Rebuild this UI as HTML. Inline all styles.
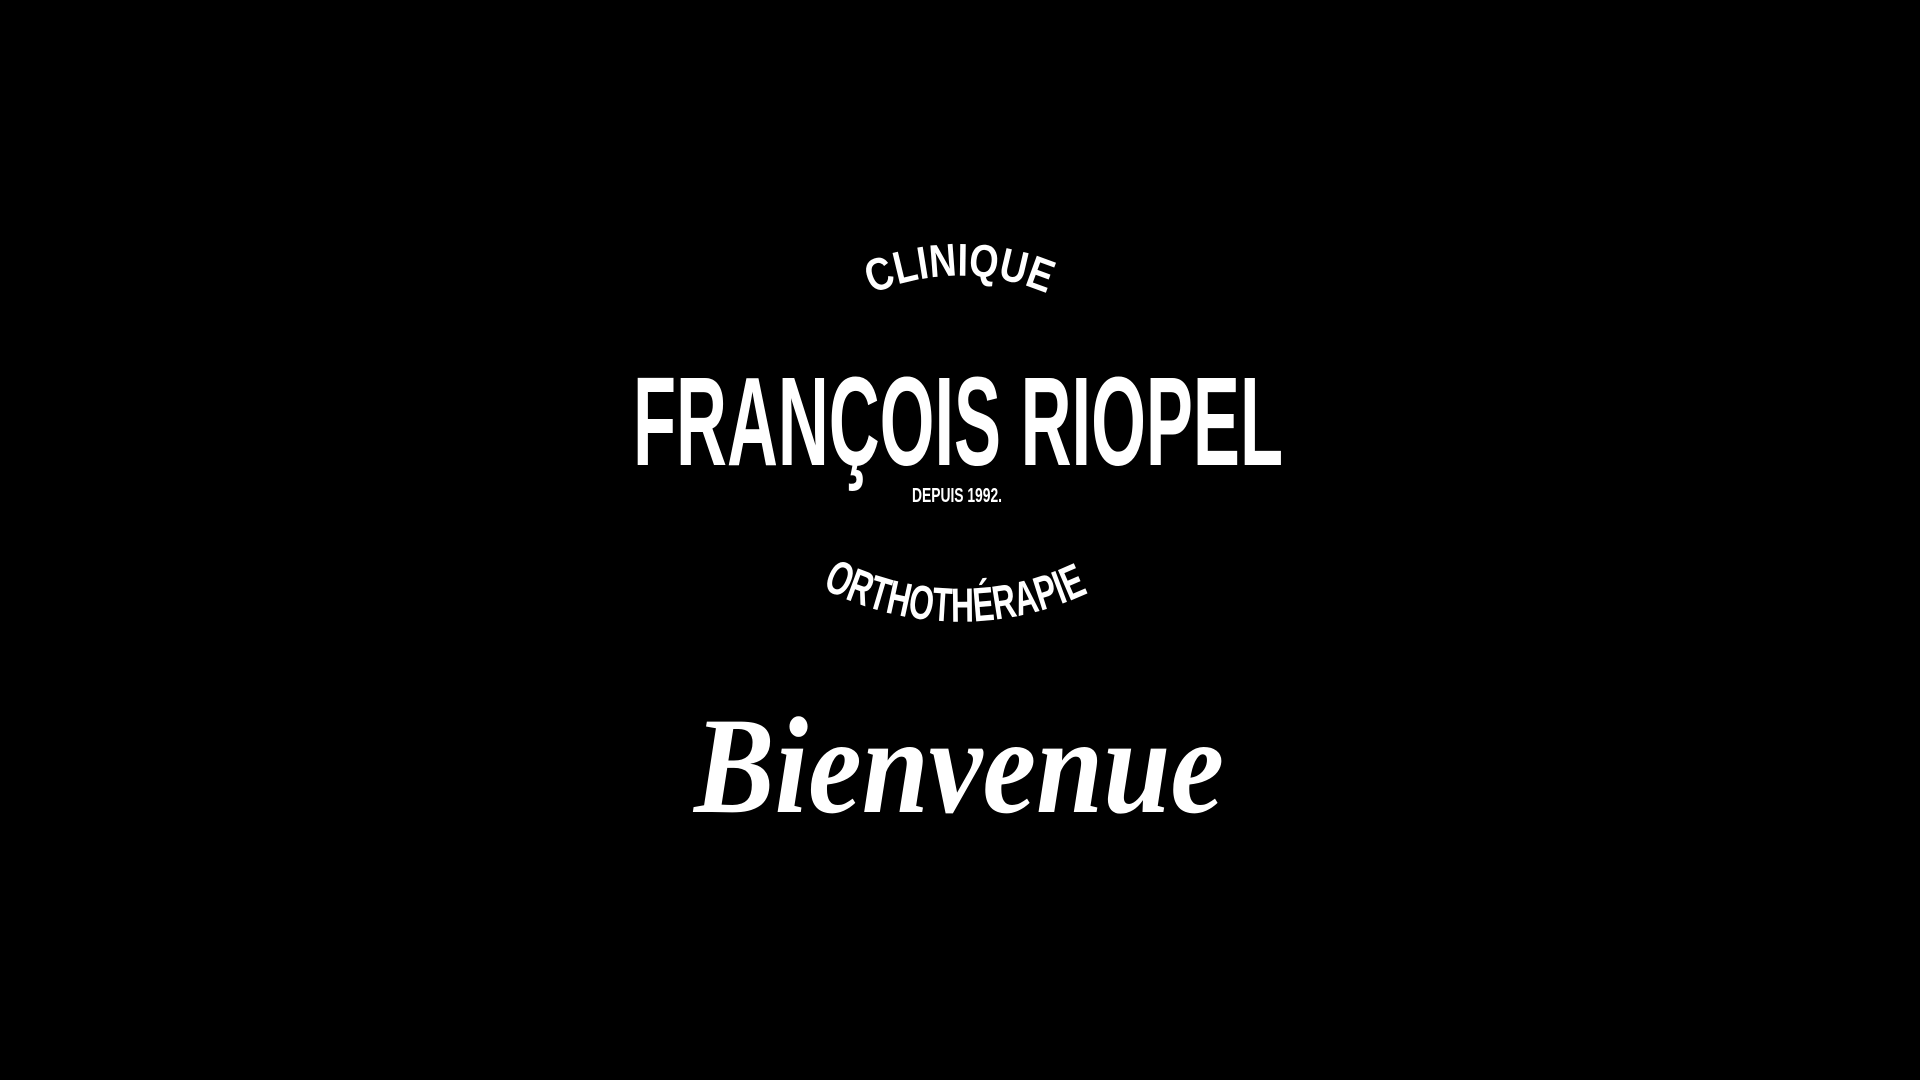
<!DOCTYPE html>
<html><head><meta charset="utf-8"><style>
html,body{margin:0;padding:0;background:#000;width:1920px;height:1080px;overflow:hidden}
svg{display:block}
text{fill:#fff;font-family:"Liberation Sans",sans-serif;font-weight:bold}
</style></head><body>
<svg width="1920" height="1080" viewBox="0 0 1920 1080">
<defs>
<path id="top" d="M872 294 A220 220 0 0 1 1048 294"/>
<path id="bot" d="M822 588 A300 300 0 0 0 1098 588"/>
</defs>
<text font-size="46"><textPath href="#top" textLength="180" lengthAdjust="spacingAndGlyphs">CLINIQUE</textPath></text>
<text x="633" y="465" font-size="126" textLength="650" lengthAdjust="spacingAndGlyphs">FRANÇOIS RIOPEL</text>
<text x="912" y="502" font-size="20" textLength="90" lengthAdjust="spacingAndGlyphs">DEPUIS 1992.</text>
<text font-size="48"><textPath href="#bot" textLength="276" lengthAdjust="spacingAndGlyphs">ORTHOTHÉRAPIE</textPath></text>
<text x="694" y="812" font-size="138" font-style="italic" style="font-family:'Liberation Serif',serif" textLength="530" lengthAdjust="spacingAndGlyphs">Bienvenue</text>
</svg>
</body></html>
